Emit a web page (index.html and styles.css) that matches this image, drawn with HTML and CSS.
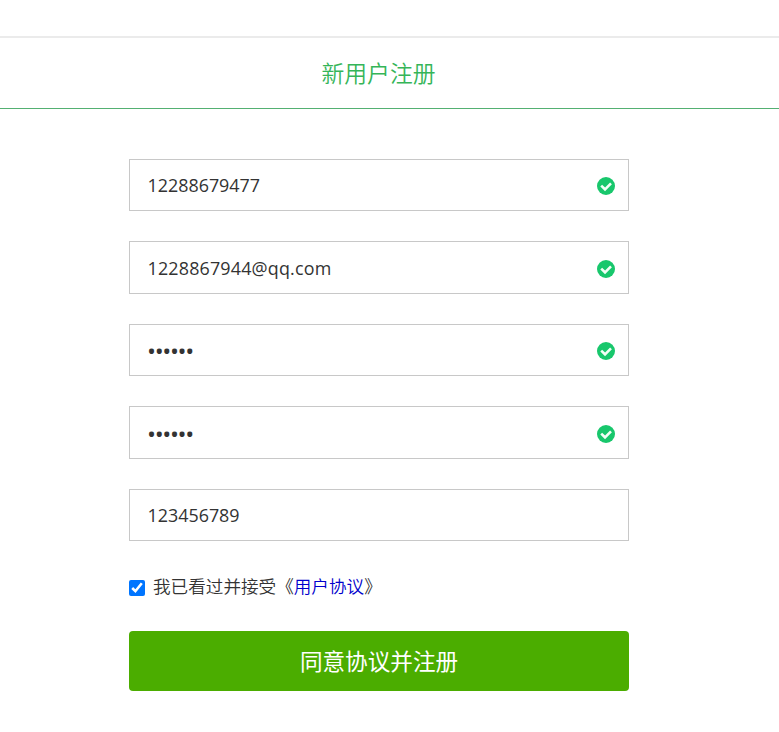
FILE: index.html
```html
<!DOCTYPE html>
<html lang="zh-CN">
<head>
<meta charset="utf-8">
<title>新用户注册</title>
<link rel="stylesheet" href="styles.css">
</head>
<body>
<svg width="0" height="0" class="sprite" aria-hidden="true">
  <symbol id="check" viewBox="0 0 18 18">
    <circle cx="9" cy="9" r="9" fill="#18c76c"/>
    <path d="M4.2 8.6 8 12.3l6-6" fill="none" stroke="#f2fff6" stroke-width="2.6"/>
  </symbol>
</svg>
<header class="header"><h1 class="title">新用户注册</h1></header>
<form class="form">
  <div class="field"><input class="input" type="text" value="12288679477"><svg class="ok"><use href="#check"/></svg></div>
  <div class="field"><input class="input email" type="text" value="1228867944@qq.com"><svg class="ok"><use href="#check"/></svg></div>
  <div class="field"><input class="input password" type="password" value="123456"><svg class="ok"><use href="#check"/></svg></div>
  <div class="field"><input class="input password" type="password" value="123456"><svg class="ok"><use href="#check"/></svg></div>
  <div class="field"><input class="input" type="text" value="123456789"></div>
  <label class="agree"><input class="checkbox" type="checkbox" checked><span>我已看过并接受《<a class="link" href="#">用户协议</a>》</span></label>
  <button class="submit" type="button">同意协议并注册</button>
</form>
</body>
</html>
```
FILE: styles.css
```css
* { box-sizing: border-box; }
body {
  margin: 0;
  padding-top: 36px;
  background: #fff;
  color: #333;
  font-family: "Open Sans", "Noto Sans CJK SC", sans-serif;
}
.sprite { display: none; }
.header {
  height: 73px;
  border-top: 2px solid #ebebeb;
  border-bottom: 1px solid #53b072;
}
.title {
  margin: 0;
  padding-right: 22px;
  text-align: center;
  font: 350 22.8px/70px "Noto Sans CJK SC", sans-serif;
  color: #35b558;
}
.form {
  width: 500px;
  margin: 49.9px 0 0 129px;
}
.field {
  display: flex;
  align-items: center;
  height: 52.5px;
  margin-bottom: 30px;
  padding: 0 13px 0 17.5px;
  border: 1px solid #c8c8c8;
}
.input {
  flex: 1;
  min-width: 0;
  height: 40px;
  padding: 0;
  border: 0;
  outline: 0;
  background: none;
  color: #333;
  font: 400 17.9px/40px "Open Sans", sans-serif;
}
.email { letter-spacing: .18px; }
.password {
  margin-top: 2px;
  font-size: 24px;
  letter-spacing: -1.38px;
  text-indent: -.5px;
}
.ok { width: 18px; height: 18px; flex: none; position: relative; top: 1px; }
.agree {
  display: flex;
  align-items: center;
  height: 30px;
  margin-top: 30.6px;
  font: 350 17.6px/28px "Noto Sans CJK SC", sans-serif;
}
.agree span { margin-top: -2px; }
.checkbox { width: 16px; height: 16px; margin: 2px 8px 0 0; }
.link { color: #00c; text-decoration: none; }
.submit {
  display: block;
  width: 500px;
  height: 60px;
  margin-top: 29px;
  padding: 0;
  border: 0;
  border-radius: 4px;
  background: #4bad00;
  color: #fff;
  font: 400 22.6px/60px "Noto Sans CJK SC", sans-serif;
}
```
